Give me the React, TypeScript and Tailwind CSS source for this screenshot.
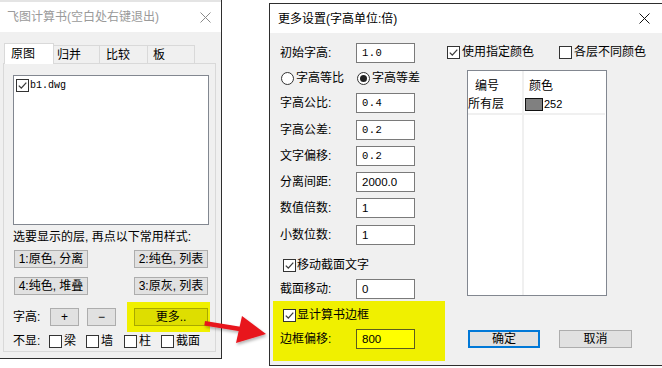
import React from "react";

const FONT = "font-['Liberation_Sans','Noto_Sans_CJK_SC',sans-serif]";

function Check({ checked = false }: { checked?: boolean }) {
  return (
    <span className="w-[13px] h-[13px] border border-[#333] bg-white flex items-center justify-center shrink-0">
      {checked && (
        <svg width="11" height="11" viewBox="0 0 11 11">
          <path d="M1.8 5.6 L4.3 8.1 L9.3 2.6" stroke="#3a3a3a" strokeWidth="1.3" fill="none" />
        </svg>
      )}
    </span>
  );
}

function Radio({ checked = false }: { checked?: boolean }) {
  return (
    <span className="w-[13px] h-[13px] rounded-full border border-[#333] bg-white flex items-center justify-center shrink-0">
      {checked && <span className="w-[7px] h-[7px] rounded-full bg-[#222]" />}
    </span>
  );
}

function Btn({ children, w = "w-[74px]" }: { children: React.ReactNode; w?: string }) {
  return (
    <div className={`${w} h-[18px] bg-[#e1e1e1] border border-[#adadad] flex items-center justify-center text-[12px] leading-[14px] text-black whitespace-pre`}>
      {children}
    </div>
  );
}

function Input({ value, mono = false, yellow = false }: { value: string; mono?: boolean; yellow?: boolean }) {
  return (
    <div
      className={`w-[59px] h-[20px] border flex items-center pl-[5px] ${
        yellow ? "bg-[#ffff00] border-[#5c5c1e]" : "bg-white border-[#7a7a7a]"
      } ${mono ? "font-['Liberation_Mono',monospace] text-[10.5px] tracking-[0.5px]" : "font-['Liberation_Sans',sans-serif] text-[11.5px]"} leading-[14px] text-black`}
    >
      {value}
    </div>
  );
}

function Row({ label, value, mono = false, yellow = false, mt }: { label: string; value: string; mono?: boolean; yellow?: boolean; mt: string }) {
  return (
    <div className={`flex items-center h-[20px] ${mt}`}>
      <span className="w-[76px] text-[12px] leading-[14px]">{label}</span>
      <Input value={value} mono={mono} yellow={yellow} />
    </div>
  );
}

function CloseX({ color }: { color: string }) {
  return (
    <svg width="11" height="11" viewBox="0 0 11 11">
      <path d="M0.5 0.5 L10.5 10.5 M10.5 0.5 L0.5 10.5" stroke={color} strokeWidth="1" fill="none" />
    </svg>
  );
}

export default function App() {
  return (
    <div className={`relative w-[662px] h-[368px] bg-white overflow-hidden text-black ${FONT}`}>
      {/* Left window */}
      <div className="absolute left-0 top-0 w-[222px] h-[359px] border-r border-b border-[#2e2e2e] flex flex-col bg-[#f0f0f0]">
        <div className="h-[32px] bg-white border-t-2 border-[#e4e4e4] flex items-center justify-between pl-[7px] pr-[10px]">
          <span className="text-[12px] leading-[14px] text-[#9a9a9a]">飞图计算书(空白处右键退出)</span>
          <CloseX color="#8a8a8a" />
        </div>
        <div className="flex-1 pt-[11px] pl-[3px]">
          <div className="w-[213px] flex flex-col">
            <div className="flex items-end h-[20px]">
              <div className="relative z-10 ml-[1px] -mb-[1px] w-[50px] h-[21px] bg-white border-t border-l border-r border-[#d9d9d9] flex items-center pl-[6px] text-[12px] leading-[14px]">
                原图
              </div>
              <div className="w-[46px] h-[18px] border-t border-r border-[#d9d9d9] flex items-center pl-[3px] text-[12px] leading-[14px]">
                归并
              </div>
              <div className="w-[48px] h-[18px] border-t border-r border-[#d9d9d9] flex items-center pl-[6px] text-[12px] leading-[14px]">
                比较
              </div>
              <div className="w-[47px] h-[18px] border-t border-r border-[#d9d9d9] flex items-center pl-[5px] text-[12px] leading-[14px]">
                板
              </div>
            </div>
            <div className="w-[213px] h-[289px] border border-[#d9d9d9] flex flex-col">
              <div className="ml-[9px] mt-[11px] w-[196px] h-[150px] border border-[#828790] bg-white pt-[3px] pl-[2px]">
                <div className="flex items-center gap-[1px] h-[13px]">
                  <Check checked />
                  <span className="font-['Liberation_Mono',monospace] text-[10px] leading-[13px]">b1.dwg</span>
                </div>
              </div>
              <div className="mt-[5px] ml-[9px] h-[14px] text-[12px] leading-[14px] whitespace-pre">选要显示的层, 再点以下常用样式:</div>
              <div className="mt-[6px] ml-[10px] w-[194px] flex justify-between">
                <Btn>1:原色, 分离</Btn>
                <Btn>2:纯色, 列表</Btn>
              </div>
              <div className="mt-[9px] ml-[10px] w-[194px] flex justify-between">
                <Btn>4:纯色, 堆叠</Btn>
                <Btn>3:原灰, 列表</Btn>
              </div>
              <div className="mt-[7px] h-[30px] flex items-center">
                <span className="ml-[9px] w-[37px] text-[12px] leading-[14px]">字高:</span>
                <Btn w="w-[29px]">+</Btn>
                <div className="ml-[8px]">
                  <Btn w="w-[29px]">−</Btn>
                </div>
                <div className="ml-[11px] w-[83px] h-[30px] bg-[#f0f000] flex items-center pl-[7px]">
                  <div className="w-[74px] h-[18px] bg-[#dede00] border border-[#a8a800] flex items-center justify-center text-[12px] leading-[14px]">
                    更多..
                  </div>
                </div>
              </div>
              <div className="mt-[2px] h-[14px] flex items-center text-[12px] leading-[14px]">
                <span className="ml-[9px] w-[36px]">不显:</span>
                <div className="w-[37px] flex items-center gap-[2px]"><Check /><span>梁</span></div>
                <div className="w-[38px] flex items-center gap-[2px]"><Check /><span>墙</span></div>
                <div className="w-[37px] flex items-center gap-[2px]"><Check /><span>柱</span></div>
                <div className="flex items-center gap-[2px]"><Check /><span>截面</span></div>
              </div>
            </div>
          </div>
        </div>
      </div>

      {/* Right window */}
      <div className="absolute left-[269px] top-[3px] w-[400px] h-[363px] border border-[#2e2e2e] flex flex-col bg-[#f0f0f0]">
        <div className="h-[29px] bg-white flex items-center pl-[8px] shrink-0">
          <span className="text-[12px] leading-[14px]">更多设置(字高单位:倍)</span>
          <span className="ml-[242px]"><CloseX color="#111" /></span>
        </div>
        <div className="flex-1 flex">
          {/* left column */}
          <div className="ml-[3px] w-[172px] flex flex-col">
            <div className="pl-[7px]">
              <Row label="初始字高:" value="1.0" mono mt="mt-[10px]" />
              <div className="mt-[8px] h-[14px] flex items-center text-[12px] leading-[14px]">
                <span className="ml-[1px]"><Radio /></span>
                <span className="ml-[2px] w-[61px]">字高等比</span>
                <Radio checked />
                <span className="ml-[2px]">字高等差</span>
              </div>
              <Row label="字高公比:" value="0.4" mono mt="mt-[8px]" />
              <Row label="字高公差:" value="0.2" mono mt="mt-[7px]" />
              <Row label="文字偏移:" value="0.2" mono mt="mt-[6px]" />
              <Row label="分离间距:" value="2000.0" mt="mt-[6px]" />
              <Row label="数值倍数:" value="1" mt="mt-[6px]" />
              <Row label="小数位数:" value="1" mt="mt-[7px]" />
              <div className="mt-[13px] h-[14px] flex items-center text-[12px] leading-[14px]">
                <span className="ml-[3px]"><Check checked /></span>
                <span className="ml-[1px]">移动截面文字</span>
              </div>
              <Row label="截面移动:" value="0" mt="mt-[7px]" />
            </div>
            <div className="mt-[2px] w-[172px] h-[60px] bg-[#f0f000] pl-[7px] pt-[7px]">
              <div className="h-[14px] flex items-center text-[12px] leading-[14px]">
                <span className="ml-[3px]"><Check checked /></span>
                <span className="ml-[1px]">显计算书边框</span>
              </div>
              <Row label="边框偏移:" value="800" yellow mt="mt-[7px]" />
            </div>
          </div>
          {/* right column */}
          <div className="flex flex-col pt-[12px]">
            <div className="h-[14px] flex items-center text-[12px] leading-[14px]">
              <span className="ml-[2px]"><Check checked /></span>
              <span className="ml-[2px] w-[97px]">使用指定颜色</span>
              <Check />
              <span className="ml-[2px]">各层不同颜色</span>
            </div>
            <div className="mt-[11px] ml-[22px] w-[140px] h-[226px] border border-[#828790] bg-white flex flex-col text-[12px] leading-[14px]">
              <div className="flex h-[24px]">
                <div className="w-[54px] pl-[7px] flex items-center pt-[6px]">编号</div>
                <div className="w-[2px] bg-[#f0f0f0]" />
                <div className="flex-1 pl-[5px] flex items-center pt-[6px]">颜色</div>
              </div>
              <div className="flex h-[18px]">
                <div className="w-[54px] flex items-center">所有层</div>
                <div className="w-[2px] bg-[#f0f0f0]" />
                <div className="flex-1 flex items-center pl-[1px]">
                  <span className="w-[18px] h-[13px] bg-[#808080] border border-[#111]" />
                  <span className="ml-[1px] font-['Liberation_Sans',sans-serif] text-[11px] leading-[13px]">252</span>
                </div>
              </div>
              <div className="h-[2px] w-[137px] bg-[#f0f0f0]" />
              <div className="flex flex-1">
                <div className="w-[54px]" />
                <div className="w-[2px] bg-[#f0f0f0]" />
                <div className="flex-1" />
              </div>
            </div>
            <div className="mt-[34px] ml-[23px] flex gap-[19px]">
              <div className="w-[72px] h-[18px] bg-[#e1e1e1] border-2 border-[#0078d7] flex items-center justify-center text-[12px] leading-[14px]">
                确定
              </div>
              <div className="w-[73px] h-[18px] bg-[#e1e1e1] border border-[#adadad] flex items-center justify-center text-[12px] leading-[14px]">
                取消
              </div>
            </div>
          </div>
        </div>
      </div>

      {/* Red arrow */}
      <svg className="absolute left-0 top-0 pointer-events-none" width="662" height="368" viewBox="0 0 662 368">
        <defs>
          <filter id="sh" x="-20%" y="-50%" width="140%" height="200%">
            <feDropShadow dx="1" dy="2" stdDeviation="1.5" floodColor="#000" floodOpacity="0.3" />
          </filter>
        </defs>
        <g filter="url(#sh)">
          <path d="M205 321 L242 327 L241.3 331.5 L204.3 325.5 Z" fill="#e8141c" />
          <path d="M242 316 L266 334 L236 343 Z" fill="#e8141c" />
        </g>
      </svg>
    </div>
  );
}
